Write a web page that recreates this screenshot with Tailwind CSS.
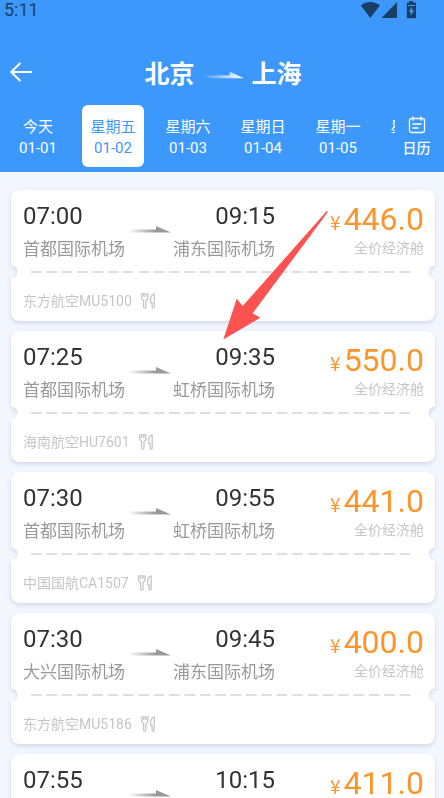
<!DOCTYPE html>
<html lang="zh-CN">
<head>
<meta charset="utf-8">
<meta name="viewport" content="width=device-width, initial-scale=1">
<title>北京 - 上海</title>
<script src="https://cdn.jsdelivr.net/npm/@tailwindcss/browser@4"></script>
</head>
<body class="relative flex h-screen flex-col overflow-hidden bg-[#f2f6ff] font-['Roboto','Noto_Sans_CJK_SC',sans-serif] text-[#333]">
<header class="h-[172px] shrink-0 bg-[#3d98fc] text-white">
  <div class="flex h-5 items-center justify-between pr-7 pl-1 text-[#1a3f66]">
    <span class="text-[18px] leading-5">5:11</span>
    <svg class="h-[18px] w-[58px]" viewBox="0 0 58 18" fill="currentColor" aria-hidden="true">
      <path d="M2.8 4.6C5.4 2.4 8.4 1 12.300 1s7 1.400 9.600 3.600L12.300 17z"/>
      <path d="M39 1v16H23.500z"/>
      <path fill-rule="evenodd" d="M51 0h4v1.500h2q1.200 0 1.200 1.200V16q0 1.200-1.200 1.200h-7q-1.200 0-1.200-1.200V2.700q0-1.200 1.200-1.200h1zM50 4v1h7V4zM54 5.500 50.800 10.500h1.900V14.500L56.200 9.200H54z"/>
    </svg>
  </div>
  <div class="grid grid-cols-[48px_1fr_46px] items-center pt-[32px]">
    <button type="button" class="flex h-[40px] items-center pl-[10px]" aria-label="返回">
      <svg class="size-[22px]" viewBox="0 0 22 22" fill="none" stroke="currentColor" stroke-width="2" stroke-linecap="round" stroke-linejoin="round"><path d="M21 10H1.500M9.800 1.500 1.300 10l8.500 8.500"/></svg>
    </button>
    <h1 class="flex items-center justify-center gap-2 pt-1 text-[25px] leading-[38px] font-bold">
      <span>北京</span>
      <svg class="h-2 w-[41px]" viewBox="0 0 43 8" aria-hidden="true"><defs><linearGradient id="fadeWhite"><stop offset="0" stop-color="#fff" stop-opacity="0"/><stop offset=".75" stop-color="#fff" stop-opacity=".8"/><stop offset="1" stop-color="#fff"/></linearGradient></defs><path fill="url(#fadeWhite)" d="M0 4.200h28V.500l15 7H0z"/></svg>
      <span>上海</span>
    </h1>
  </div>
  <nav class="flex pt-[11px] text-[15px] leading-[21px]" aria-label="日期">
    <div class="flex min-w-0 flex-1 gap-[13px] overflow-hidden pl-[7px]">
      <button type="button" class="h-[62px] w-[62px] shrink-0 rounded-md pt-1">今天<br>01-01</button>
      <button type="button" class="h-[62px] w-[62px] shrink-0 rounded-md bg-white pt-1 text-[#3d98fc]">星期五<br>01-02</button>
      <button type="button" class="h-[62px] w-[62px] shrink-0 rounded-md pt-1">星期六<br>01-03</button>
      <button type="button" class="h-[62px] w-[62px] shrink-0 rounded-md pt-1">星期日<br>01-04</button>
      <button type="button" class="h-[62px] w-[62px] shrink-0 rounded-md pt-1">星期一<br>01-05</button>
      <button type="button" class="h-[62px] w-[62px] shrink-0 rounded-md pt-1 pb-[21px]">星期二</button>
    </div>
    <button type="button" class="flex w-[49px] flex-col items-center justify-center gap-1 pt-[2px] pr-[6px] text-[14px] leading-5">
      <svg class="h-[18px] w-[18px]" viewBox="0 0 18 18" fill="none" stroke="currentColor" stroke-width="1.300" stroke-linecap="round"><rect x="1.500" y="2.500" width="15" height="14" rx="2"/><path d="M5 .8v3.400M13 .8v3.400M5 8h8M5 12h5"/></svg>
      <span class="font-medium">日历</span>
    </button>
  </nav>
</header>
<main id="flights" class="flex min-h-0 flex-1 flex-col gap-[10px] overflow-y-auto px-[9px] pt-[18px] pl-[11px] [scrollbar-width:none]"></main>
<svg class="pointer-events-none absolute top-[210px] left-[222px] h-[131px] w-[107px]" viewBox="222 210 107 131" fill="#fc5350" aria-hidden="true"><path d="M326.500 211.300Q328 210.800 327.500 212.500L252.700 313.300 260.300 317.800 223.300 339.600 236.700 298.700 242.700 306z"/></svg>
<svg class="absolute size-0" aria-hidden="true"><defs><linearGradient id="fadeGray"><stop offset="0" stop-color="#999" stop-opacity="0"/><stop offset=".65" stop-color="#999"/></linearGradient></defs></svg>
<script>
const flights = [
  { dep: '07:00', arr: '09:15', from: '首都国际机场', to: '浦东国际机场', price: '446.0', no: '东方航空MU5100' },
  { dep: '07:25', arr: '09:35', from: '首都国际机场', to: '虹桥国际机场', price: '550.0', no: '海南航空HU7601' },
  { dep: '07:30', arr: '09:55', from: '首都国际机场', to: '虹桥国际机场', price: '441.0', no: '中国国航CA1507' },
  { dep: '07:30', arr: '09:45', from: '大兴国际机场', to: '浦东国际机场', price: '400.0', no: '东方航空MU5186' },
  { dep: '07:55', arr: '10:15', price: '411.0' },
];
const place = (name) => name ? `<div class="text-[17px] leading-6 whitespace-nowrap text-[#999]">${name}</div>` : '';
document.getElementById('flights').innerHTML = flights.map((f) => `
<article class="shrink-0 drop-shadow-[0_2px_2px_rgba(90,110,150,0.22)]">
  <div class="h-[131px] rounded-lg bg-white [mask:radial-gradient(circle_at_0_82px,transparent_6px,black_7px)_left/51%_100%_no-repeat,radial-gradient(circle_at_100%_82px,transparent_6px,black_7px)_right/51%_100%_no-repeat]">
    <div class="flex h-[81px] justify-between pt-3 pr-[11px] pl-3">
      <div class="flex w-[252px] justify-between">
        <div class="w-[102px]"><div class="mb-[7px] text-[24px] leading-7">${f.dep}</div>${place(f.from)}</div>
        <svg class="mt-6 h-2 w-[43px]" viewBox="0 0 43 8"><path fill="url(#fadeGray)" d="M0 3.500h28V0l15 6.500H0z"/></svg>
        <div class="w-[102px] text-right"><div class="mb-[7px] text-[24px] leading-7">${f.arr}</div>${place(f.to)}</div>
      </div>
      <div class="text-right">
        <div class="mb-[2px] text-[32px] leading-[34px] text-[#fc952b]"><span class="mr-[3px] font-['Noto_Sans_CJK_SC',sans-serif] text-[19px] leading-5">¥</span>${f.price}</div>
        ${f.no ? '<div class="text-[14px] leading-5 text-[#c6c6c6]">全价经济舱</div>' : ''}
      </div>
    </div>
    <div class="mx-5 h-[2px] bg-[linear-gradient(90deg,#dedede_70%,transparent_70%)] bg-[size:4%_100%]"></div>
    ${f.no ? `<div class="flex items-center gap-[9px] px-3 pt-[18px] text-[14px] leading-5 text-[#c6c6c6]">
      <span>${f.no}</span>
      <svg class="h-[16px] w-[14px]" viewBox="0 0 14 16" fill="none" stroke="currentColor" stroke-width="1.300" stroke-linejoin="round"><path d="M.7.800V5.500L2.600 7.700V14q0 1.200 1.200 1.200T5 14V7.700L7 5.500V.800zM2.800.800V4M4.900.800V4M13.200.800Q9.600 2 9.600 6.500v3h1.500V14q0 1.200 1 1.200t1.100-1.200z"/></svg>
    </div>` : ''}
  </div>
</article>`).join('');
</script>
</body>
</html>
